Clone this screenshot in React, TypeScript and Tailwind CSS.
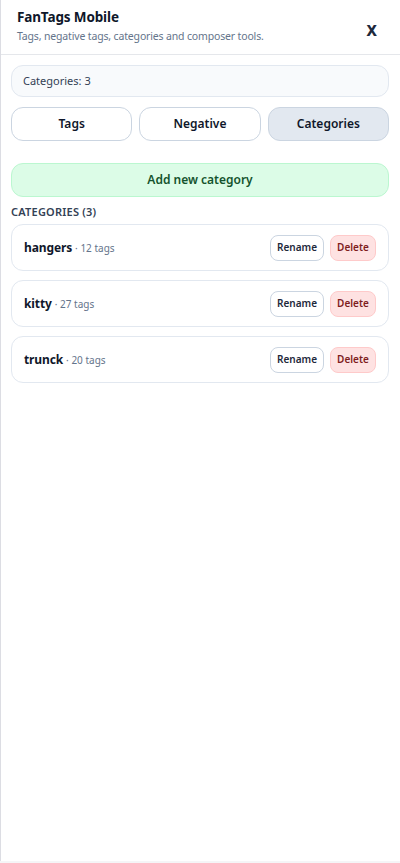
import React from 'react';

const categories = [
  { name: 'hangers', count: 12 },
  { name: 'kitty', count: 27 },
  { name: 'trunck', count: 20 },
];

const tabs = ['Tags', 'Negative', 'Categories'];

const App = () => {
  return (
    <div className="min-h-screen bg-[#f5f5f7]" style={{ fontFamily: '"Noto Sans", "Open Sans", sans-serif' }}>
      <div className="h-[861px] w-[400px] border-l border-[#dcdde3] bg-white">
        <div className="flex items-center justify-between border-b border-[#e5e7eb] pl-[16px] pr-[23px] pt-[7px] pb-[10px]">
          <div>
            <h1 className="text-[13.5px] font-bold leading-[20px] tracking-[-0.01em] text-[#0f172a]">FanTags Mobile</h1>
            <p className="mt-px text-[10.5px] leading-[16px] tracking-[-0.015em] text-[#64748b]">
              Tags, negative tags, categories and composer tools.
            </p>
          </div>
          <button className="mt-[10px] text-[15px] font-extrabold text-[#1e293b]">X</button>
        </div>

        <div className="pl-[10px] pr-[11px] pt-[10px]">
          <div className="flex h-[32px] items-center rounded-xl border border-[#e2e8f0] bg-[#f8fafc] px-[11px] text-[11px] text-[#334155]">
            Categories: 3
          </div>

          <div className="mt-[10px] grid grid-cols-3 gap-[7px]">
            {tabs.map((tab) => (
              <button
                key={tab}
                className={
                  tab === 'Categories'
                    ? 'h-[34px] rounded-xl border border-[#cbd5e1] bg-[#e2e8f0] text-[12px] font-semibold text-[#0f172a]'
                    : 'h-[34px] rounded-xl border border-[#cbd5e1] bg-white text-[12px] font-semibold text-[#0f172a]'
                }
              >
                {tab}
              </button>
            ))}
          </div>

          <button className="mt-[22px] h-[34px] w-full rounded-xl border border-[#bbf7d0] bg-[#dcfce7] text-[12px] font-semibold text-[#14532d]">
            Add new category
          </button>

          <div className="mt-[7px] text-[11px] font-semibold uppercase leading-[16px] tracking-[0.02em] text-[#334155]">
            Categories (3)
          </div>

          <div className="mt-[4px] flex flex-col gap-[9px]">
            {categories.map((c) => (
              <div
                key={c.name}
                className="flex h-[47px] items-center justify-between rounded-xl border border-[#e2e8f0] bg-white pl-[12px] pr-[12px]"
              >
                <div className="flex items-baseline">
                  <span className="text-[12px] font-bold tracking-[-0.01em] text-[#0f172a]">{c.name}</span>
                  <span className="ml-[3px] text-[10px] text-[#64748b]">· {c.count} tags</span>
                </div>
                <div className="flex gap-[6px]">
                  <button className="h-[26px] w-[54px] rounded-lg border border-[#cbd5e1] bg-white text-[10px] font-semibold text-[#1e293b]">
                    Rename
                  </button>
                  <button className="h-[26px] w-[46px] rounded-lg border border-[#fecaca] bg-[#fee2e2] text-[10px] font-semibold text-[#7f1d1d]">
                    Delete
                  </button>
                </div>
              </div>
            ))}
          </div>
        </div>
      </div>
    </div>
  );
};

export default App;
